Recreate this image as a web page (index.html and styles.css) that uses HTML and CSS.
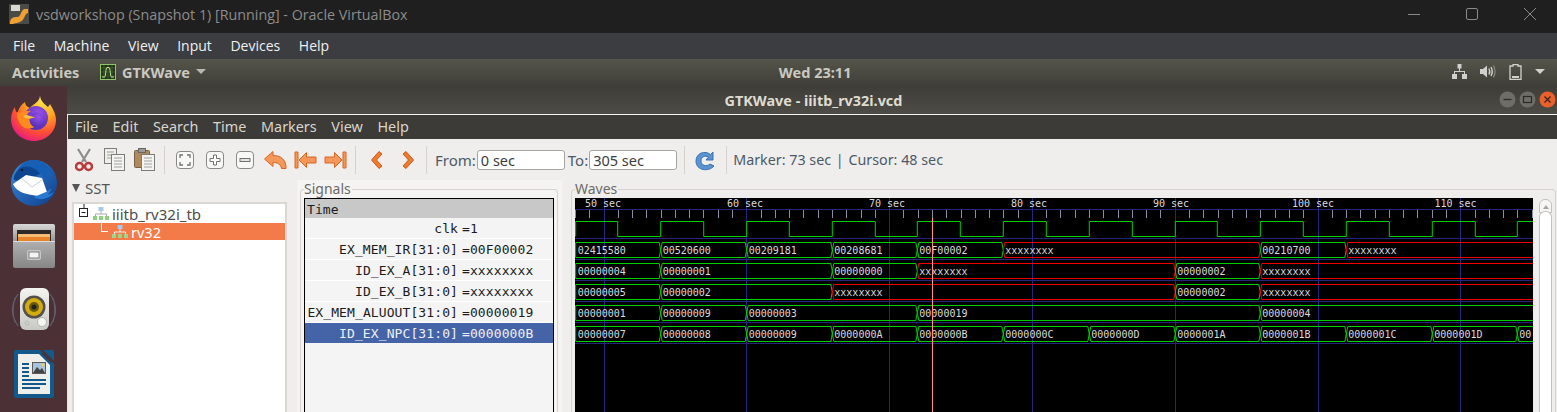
FILE: index.html
```html
<!DOCTYPE html>
<html lang="en">
<head>
    <meta charset="UTF-8">
    <title>vsdworkshop (Snapshot 1) [Running] - Oracle VirtualBox</title>
    <link rel="stylesheet" href="styles.css">
</head>
<body>
    <!-- host window -->
    <div class="winbar">
        <svg class="vbox-logo" width="20" height="20" viewBox="0 0 20 20">
            <rect width="20" height="20" fill="#4a4a48"/>
            <rect x="2" y="1" width="9" height="6" fill="#d8d8d0"/>
            <path d="M1 19 C1 14 4 13 8 13 C12 13 11 8 15 5 L19 5 L19 9 C15 10 16 16 11 18 C8 19.500 5 19 4 20 L1 20Z" fill="#f0a030"/>
        </svg>
        <span class="winbar-title">vsdworkshop (Snapshot 1) [Running] - Oracle VirtualBox</span>
        <div class="winbar-ctl">
            <svg width="14" height="14" viewBox="0 0 14 14"><path d="M1 7.500H13" stroke="#8a8a8a" fill="none"/></svg>
            <svg width="14" height="14" viewBox="0 0 14 14"><rect x="1.500" y="1.500" width="11" height="11" rx="1.500" stroke="#8a8a8a" fill="none"/></svg>
            <svg width="14" height="14" viewBox="0 0 14 14"><path d="M1 1L13 13M13 1L1 13" stroke="#8a8a8a" fill="none"/></svg>
        </div>
    </div>
    <div class="vmenu">
        <span>File</span><span>Machine</span><span>View</span><span>Input</span><span>Devices</span><span>Help</span>
    </div>

    <!-- gnome top bar -->
    <div class="topbar">
        <span class="activities">Activities</span>
        <svg class="app-icon" width="16" height="16" viewBox="0 0 16 16">
            <rect x=".5" y=".5" width="15" height="15" fill="#24341a" stroke="#8fc46a"/>
            <path d="M4 1V15M8 1V15M12 1V15M1 4H15M1 8H15M1 12H15" stroke="#4a6c32" stroke-width=".6"/>
            <path d="M2 13H4.500C6 13 5.500 3.500 7 3.500H9C10.500 3.500 10 13 11.500 13H14" stroke="#c4ec9c" fill="none"/>
        </svg>
        <span class="app-name">GTKWave</span>
        <span class="caret"></span>
        <span class="clock">Wed 23:11</span>
        <div class="tray">
            <svg width="15" height="15" viewBox="0 0 15 15"><path d="M5.500 0H9.500V4.500H8V7H13V10H15V15H10V10H12V8H3V10H5V15H0V10H2V7H7V4.500H5.500Z" fill="#d0d0cc"/></svg>
            <svg width="16" height="15" viewBox="0 0 16 15"><path d="M0 5H3L7 1.500V13.500L3 10H0Z" fill="#d0d0cc"/><path d="M9 4.500Q10.500 7.500 9 10.500M11 3Q13.500 7.500 11 12" stroke="#d0d0cc" stroke-width="1.400" fill="none"/><path d="M13.500 1.500Q16.500 7.500 13.500 13.500" stroke="#8a8a86" stroke-width="1.200" fill="none"/></svg>
            <svg width="13" height="16" viewBox="0 0 13 16"><path d="M4 .500H9V2H12V15.500H1V2H4Z" fill="none" stroke="#d0d0cc" stroke-width="1.300"/><rect x="3" y="12" width="7" height="2" fill="#d0d0cc"/></svg>
            <span class="caret"></span>
        </div>
    </div>

    <div class="desktop">
        <div class="dock">
            <div class="dock-item">
                <svg width="46" height="46" viewBox="0 0 46 46">
                    <defs>
                        <radialGradient id="ffBody" cx=".7" cy=".15" r=".95">
                            <stop offset="0" stop-color="#ffe54a"/>
                            <stop offset=".4" stop-color="#ff9c1e"/>
                            <stop offset=".72" stop-color="#ff4a38"/>
                            <stop offset="1" stop-color="#e2148c"/>
                        </radialGradient>
                        <radialGradient id="ffGlobe" cx=".6" cy=".3" r=".8">
                            <stop offset="0" stop-color="#9a50e8"/>
                            <stop offset="1" stop-color="#4a2ab0"/>
                        </radialGradient>
                    </defs>
                    <path d="M29 0C29 5 33 9 37 12C38 10.500 38.500 10 39 9C42 14 45 19 45 25C45 37 35 46 23 46C10 46 0 36 0 24C0 20 1.500 15 4 12C4 15 5 17 6.500 18C7.500 14 10.500 9 14 7C14 10 16 12 19 13C22 9 29 7 29 0Z" fill="url(#ffBody)"/>
                    <circle cx="25" cy="23" r="12" fill="url(#ffGlobe)"/>
                    <path d="M6 17C9 20 14 15 20 16C16 18 15 20 18 21C22 22 27 21 30 24C28 31 21 35 14 33C8 30 6 24 6 17Z" fill="#ff8a1e"/>
                    <circle cx="26" cy="25" r="7.500" fill="url(#ffGlobe)"/>
                    <path d="M12 21C15 19 20 22 24 22C20 24 16 25 12 21Z" fill="#ffc04a"/>
                </svg>
            </div>
            <div class="dock-item">
                <svg width="48" height="48" viewBox="0 0 48 48">
                    <defs>
                        <linearGradient id="tbBody" x1="0" y1="0" x2="1" y2="1">
                            <stop offset="0" stop-color="#3a8ee0"/>
                            <stop offset="1" stop-color="#0c3c8a"/>
                        </linearGradient>
                    </defs>
                    <circle cx="24" cy="25" r="23" fill="url(#tbBody)"/>
                    <path d="M6 18C7 8 16 1 25 2C33 3 41 9 44 17L38 14L40 22L33 18C28 12 20 14 6 18Z" fill="#155fb4"/>
                    <path d="M4 22C3 17 8 10 13 9C19 7 27 11 30 16L12 24Z" fill="#0d4690"/>
                    <circle cx="12" cy="12" r="1.300" fill="#1b1b1b"/>
                    <path d="M3 26L16 17L32 20L37 34L34 39L22 37C14 36 6 33 3 26Z" fill="#fff"/>
                    <path d="M11 20L22 29L32 22" fill="none" stroke="#c8d0d8"/>
                    <path d="M36 34L42 30L38 37L44 34C40 41 30 43 24 39Z" fill="#2a78d0"/>
                </svg>
            </div>
            <div class="dock-item">
                <svg width="42" height="44" viewBox="0 0 42 44">
                    <defs>
                        <linearGradient id="fmTop" x1="0" y1="0" x2="0" y2="1">
                            <stop offset="0" stop-color="#d8d8d8"/>
                            <stop offset="1" stop-color="#8c8c8c"/>
                        </linearGradient>
                        <linearGradient id="fmFront" x1="0" y1="0" x2="0" y2="1">
                            <stop offset="0" stop-color="#b0b0b0"/>
                            <stop offset="1" stop-color="#868686"/>
                        </linearGradient>
                    </defs>
                    <rect x="0" y="0" width="42" height="20" rx="2" fill="url(#fmTop)"/>
                    <rect x="4" y="6" width="34" height="13" fill="#2e2a28"/>
                    <rect x="5" y="10" width="32" height="4" fill="#f4bc74"/>
                    <rect x="5" y="13" width="32" height="4" fill="#e8842a"/>
                    <rect x="0" y="17" width="42" height="27" rx="2" fill="url(#fmFront)"/>
                    <rect x="0" y="17" width="42" height="1" fill="#dcdcdc"/>
                    <rect x="14" y="26" width="14" height="10" rx="2" fill="#c8c8c8"/>
                    <rect x="16" y="28" width="10" height="6" fill="#f4f4f4" stroke="#666" stroke-width=".8"/>
                </svg>
            </div>
            <div class="dock-item">
                <svg width="48" height="44" viewBox="0 0 48 44">
                    <defs>
                        <linearGradient id="rbBody" x1="0" y1="0" x2="0" y2="1">
                            <stop offset="0" stop-color="#f4f4f0"/>
                            <stop offset="1" stop-color="#c8c8c4"/>
                        </linearGradient>
                    </defs>
                    <path d="M8 6Q-3 22 8 38M5 10Q1 22 5 34M40 6Q51 22 40 38M43 10Q47 22 43 34" stroke="#6a6a7e" stroke-width="1.200" fill="none" opacity=".8"/>
                    <rect x="10" y="0" width="29" height="42" rx="6" fill="url(#rbBody)"/>
                    <circle cx="24" cy="19" r="11.500" fill="#55504a"/>
                    <circle cx="24" cy="19" r="9" fill="#d4ac10"/>
                    <circle cx="24" cy="19" r="5" fill="#6a5a10"/>
                    <circle cx="24" cy="19" r="2.500" fill="#222"/>
                    <circle cx="32" cy="34" r="4.500" fill="#f4f4f0" stroke="#a8a8a4" stroke-width=".8"/>
                    <circle cx="17" cy="35" r="2" fill="none" stroke="#b4b4b0" stroke-width=".8"/>
                </svg>
            </div>
            <div class="dock-item">
                <svg width="40" height="48" viewBox="0 0 40 48">
                    <path d="M2 0H26L40 14V46Q40 48 38 48H2Q0 48 0 46V2Q0 0 2 0Z" fill="#125a8c"/>
                    <path d="M29 0H38Q40 0 40 2V11Z" fill="#125a8c"/>
                    <path d="M4 4H25L36 15V44H4Z" fill="#eeeeea"/>
                    <path d="M28 3L37 12" stroke="#4b3136" stroke-width="1.500"/>
                    <path d="M8 14H15M8 18H15M8 22H15M8 26H15M8 30H32M8 34H32M8 38H26" stroke="#125a8c" stroke-width="2"/>
                    <rect x="18.500" y="12.500" width="13" height="11" fill="#a8c4dc" stroke="#5a5a5a"/>
                    <path d="M19 23L23 17L26 20L28 18L31 23Z" fill="#444"/>
                    <circle cx="29" cy="15" r="1.500" fill="#f0d050"/>
                </svg>
            </div>
        </div>

        <div class="gtk-window">
            <div class="gtk-title">
                <span>GTKWave - iiitb_rv32i.vcd</span>
                <div class="gtk-ctl">
                    <svg width="17" height="17" viewBox="0 0 17 17"><circle cx="8.500" cy="8.500" r="8" fill="#6e6d68"/><path d="M4.500 8.500H12.500" stroke="#2c2b28" stroke-width="1.300"/></svg>
                    <svg width="17" height="17" viewBox="0 0 17 17"><circle cx="8.500" cy="8.500" r="8" fill="#6e6d68"/><rect x="4.500" y="5.500" width="8" height="6" fill="none" stroke="#2c2b28" stroke-width="1.200"/></svg>
                    <svg width="17" height="17" viewBox="0 0 17 17"><circle cx="8.500" cy="8.500" r="8" fill="#e9602c"/><path d="M5.500 5.500L11.500 11.500M11.500 5.500L5.500 11.500" stroke="#3a2418" stroke-width="1.300"/></svg>
                </div>
            </div>
            <div class="gtk-body">
                <div class="gtk-menu">
                    <span>File</span><span>Edit</span><span>Search</span><span>Time</span><span>Markers</span><span>View</span><span>Help</span>
                </div>

                <div class="toolbar">
                    <div class="tool">
                        <svg width="18" height="24" viewBox="0 0 18 24"><path d="M3 1L11 14M15 1L7 14" stroke="#8c8c88" stroke-width="2.200" fill="none"/><circle cx="4.500" cy="18.500" r="3.500" fill="none" stroke="#b83a3a" stroke-width="2.500"/><circle cx="13.500" cy="18.500" r="3.500" fill="none" stroke="#b83a3a" stroke-width="2.500"/></svg>
                    </div>
                    <div class="tool">
                        <svg width="21" height="23" viewBox="0 0 21 23"><rect x=".5" y=".5" width="12" height="15" fill="#eeeeea" stroke="#7c7c78"/><path d="M3 4H10M3 7H10M3 10H10" stroke="#a0a09c"/><rect x="7.500" y="6.500" width="13" height="16" fill="#f4f4f2" stroke="#7c7c78"/><path d="M10 10H18M10 13H18M10 16H18M10 19H18" stroke="#a0a09c"/></svg>
                    </div>
                    <div class="tool">
                        <svg width="21" height="23" viewBox="0 0 21 23"><rect x=".5" y="2.500" width="15" height="17" rx="1" fill="#b08a5c" stroke="#7a6040"/><rect x="4.500" y=".5" width="7" height="4" fill="#9a9a96" stroke="#666"/><rect x="7.500" y="6.500" width="13" height="16" fill="#f4f4f2" stroke="#7c7c78"/><path d="M10 10H18M10 13H18M10 16H18M10 19H18" stroke="#a0a09c"/></svg>
                    </div>
                    <span class="sep"></span>
                    <div class="tool">
                        <svg width="18" height="18" viewBox="0 0 18 18"><rect x=".5" y=".5" width="17" height="17" rx="3.500" fill="#f8f8f6" stroke="#8a8a86"/><path d="M7 4H4V7M11 4H14V7M7 14H4V11M11 14H14V11" stroke="#70706c" stroke-width="1.300" fill="none"/></svg>
                    </div>
                    <div class="tool">
                        <svg width="18" height="18" viewBox="0 0 18 18"><rect x=".5" y=".5" width="17" height="17" rx="3.500" fill="#f8f8f6" stroke="#8a8a86"/><path d="M7.500 4H10.500V7.500H14V10.500H10.500V14H7.500V10.500H4V7.500H7.500Z" fill="#fff" stroke="#70706c"/></svg>
                    </div>
                    <div class="tool">
                        <svg width="18" height="18" viewBox="0 0 18 18"><rect x=".5" y=".5" width="17" height="17" rx="3.500" fill="#f8f8f6" stroke="#8a8a86"/><rect x="4" y="7.500" width="10" height="3" fill="#e4e4e0" stroke="#70706c"/></svg>
                    </div>
                    <div class="tool">
                        <svg width="23" height="18" viewBox="0 0 23 18"><path d="M9 .5V4.500C16 4.500 22.500 8 22 17.500H17.500C17 13 13 11.500 9 11.500V15.500L.5 8Z" fill="#f4975a" stroke="#dc6420" stroke-linejoin="round"/></svg>
                    </div>
                    <div class="tool">
                        <svg width="23" height="18" viewBox="0 0 23 18"><path d="M1 1H4V17H1Z" fill="#f4975a" stroke="#dc6420"/><path d="M5 9L12.500 1.500V6H22V12H12.500V16.500Z" fill="#f4975a" stroke="#dc6420" stroke-linejoin="round"/></svg>
                    </div>
                    <div class="tool">
                        <svg width="23" height="18" viewBox="0 0 23 18"><path d="M22 1H19V17H22Z" fill="#f4975a" stroke="#dc6420"/><path d="M18 9L10.500 1.500V6H1V12H10.500V16.500Z" fill="#f4975a" stroke="#dc6420" stroke-linejoin="round"/></svg>
                    </div>
                    <span class="sep"></span>
                    <div class="tool">
                        <svg width="13" height="20" viewBox="0 0 13 20"><path d="M9 1.500L1.500 10L9 18.500L12 16L6.500 10L12 4Z" fill="#ee7a30" stroke="#cc5a1c" stroke-linejoin="round"/></svg>
                    </div>
                    <div class="tool next">
                        <svg width="13" height="20" viewBox="0 0 13 20"><path d="M4 1.500L11.500 10L4 18.500L1 16L6.500 10L1 4Z" fill="#ee7a30" stroke="#cc5a1c" stroke-linejoin="round"/></svg>
                    </div>
                    <span class="sep"></span>
                    <label class="range from">From:<input type="text" value="0 sec"></label>
                    <label class="range to">To:<input type="text" value="305 sec"></label>
                    <span class="sep"></span>
                    <div class="reload">
                        <svg width="21" height="22" viewBox="0 0 21 22"><path d="M18 3V11H11L13.500 8C10 6 6 8 6 12C6 16 11 18.500 15 15L19 17C14 23 1 22 1 12C1 4 10 1 15.500 5.500Z" fill="#5b93d0" stroke="#3a70b0" stroke-linejoin="round"/></svg>
                    </div>
                    <span class="sep"></span>
                    <span class="status">Marker: 73 sec <span class="pipe">|</span> Cursor: 48 sec</span>
                </div>

                <div class="panes">
                    <div class="sst">
                        <div class="sst-head"><span class="sst-arrow"></span>SST</div>
                        <div class="tree">
                            <div class="tree-row">
                                <svg class="expander" width="10" height="16" viewBox="0 0 10 16"><path d="M5 0V4" stroke="#222"/><rect x=".5" y="4.500" width="8" height="8" fill="#fff" stroke="#222"/><path d="M2.500 8.500H6.500" stroke="#222"/></svg>
                                <svg class="tree-icon" width="16" height="13" viewBox="0 0 16 13"><rect x="5.500" y="0" width="5" height="4" fill="#a8c8f0"/><path d="M8 4V7M2.500 9V7H13.500V9" stroke="#aaa" fill="none"/><rect x="0" y="9" width="4" height="4" fill="#8ed080"/><rect x="6" y="9" width="4" height="4" fill="#8ed080"/><rect x="12" y="9" width="4" height="4" fill="#8ed080"/></svg>
                                <span>iiitb_rv32i_tb</span>
                            </div>
                            <div class="tree-row selected">
                                <span class="branch"></span>
                                <svg class="tree-icon" width="16" height="13" viewBox="0 0 16 13"><rect x="5.500" y="0" width="5" height="4" fill="#a8c8f0"/><path d="M8 4V7M2.500 9V7H13.500V9" stroke="#eee" fill="none"/><rect x="0" y="9" width="4" height="4" fill="#9ad88a"/><rect x="6" y="9" width="4" height="4" fill="#9ad88a"/><rect x="12" y="9" width="4" height="4" fill="#9ad88a"/></svg>
                                <span>rv32</span>
                            </div>
                        </div>
                    </div>

                    <div class="signals-pane">
                        <fieldset class="frame">
                            <legend>Signals</legend>
                            <div class="signal-list">
                                <div class="time-head">Time</div>
                                <div class="signal"><span class="sig-name">clk</span><span>=1</span></div>
                                <div class="signal"><span class="sig-name">EX_MEM_IR[31:0]</span><span>=00F00002</span></div>
                                <div class="signal"><span class="sig-name">ID_EX_A[31:0]</span><span>=xxxxxxxx</span></div>
                                <div class="signal"><span class="sig-name">ID_EX_B[31:0]</span><span>=xxxxxxxx</span></div>
                                <div class="signal"><span class="sig-name">EX_MEM_ALUOUT[31:0]</span><span>=00000019</span></div>
                                <div class="signal active"><span class="sig-name">ID_EX_NPC[31:0]</span><span>=0000000B</span></div>
                            </div>
                        </fieldset>
                    </div>

                    <div class="waves-pane">
                        <fieldset class="frame">
                            <legend>Waves</legend>
                            <div class="wave-wrap">
                                <svg id="waves" class="wave-canvas" width="958" height="214" viewBox="575 198 958 214"></svg>
                                <div class="vscroll">
                                    <div class="vscroll-btn"><span></span></div>
                                    <div class="vscroll-thumb"></div>
                                </div>
                            </div>
                        </fieldset>
                    </div>
                </div>
            </div>
        </div>
    </div>
    <script src="waves.js"></script>
</body>
</html>
```
FILE: styles.css
```css
* {
    box-sizing: border-box;
}
html, body {
    margin: 0;
    height: 412px;
    overflow: hidden;
}
body {
    font-family: "Noto Sans", "Open Sans", sans-serif;
    background-color: #3c3b37;
}

/* host window */
.winbar {
    display: flex;
    align-items: center;
    height: 33px;
    padding: 0 20px 5px 9px;
    background-color: #1f1f1f;
    color: #8c8c8c;
    font-family: "Open Sans", sans-serif;
    font-size: 14.3px;
}
.winbar-title {
    margin-left: 7px;
}
.winbar-ctl {
    display: flex;
    gap: 44px;
    margin-left: auto;
}
.vmenu {
    display: flex;
    align-items: center;
    gap: 18.6px;
    height: 26px;
    padding: 0 0 2px 13px;
    background-color: #3b3d41;
    color: #f0f0f0;
    font-family: "Open Sans", sans-serif;
    font-size: 14px;
}

/* top bar */
.topbar {
    display: flex;
    align-items: center;
    height: 27px;
    padding: 0 0 2px 12px;
    background: linear-gradient(#56554b, #3f3e38);
    color: #c9c9c2;
    font-size: 14.5px;
    font-weight: bold;
}
.activities {
    width: 88px;
}
.app-name {
    margin-left: 6px;
}
.caret {
    width: 0;
    height: 0;
    margin-left: 6px;
    border-left: 5px solid transparent;
    border-right: 5px solid transparent;
    border-top: 5px solid #b8b8b2;
}
.clock {
    margin-left: 573px;
}
.tray {
    display: flex;
    align-items: center;
    gap: 13px;
    margin-left: auto;
    padding-right: 12px;
}
.tray .caret {
    margin-left: 0;
    border-top-color: #d0d0cc;
}

/* dock + window */
.desktop {
    display: flex;
    height: 326px;
}
.dock {
    display: flex;
    flex-direction: column;
    flex: none;
    width: 67px;
    background-color: #4b3136;
}
.dock-item {
    display: flex;
    flex: none;
    align-items: center;
    justify-content: center;
    height: 64px;
}
.gtk-window {
    display: flex;
    flex-direction: column;
    flex: 1;
    min-width: 0;
}
.gtk-title {
    display: flex;
    flex: none;
    align-items: center;
    justify-content: center;
    position: relative;
    height: 28px;
    padding-left: 3px;
    background: linear-gradient(#3e3d38, #4c4b45);
    color: #dfdbd2;
    font-size: 14.4px;
    font-weight: bold;
}
.gtk-ctl {
    display: flex;
    position: absolute;
    top: 5px;
    right: 1px;
    gap: 3px;
}
.gtk-body {
    flex: 1;
    min-height: 0;
    border-top: 1px solid #f4f4f2;
    border-left: 1px solid #e8e6e2;
    background-color: #f0eeec;
}
.gtk-menu {
    display: flex;
    align-items: center;
    gap: 14.6px;
    height: 24px;
    padding: 0 0 2px 7px;
    background-color: #3c3b37;
    color: #d9d5cc;
    font-size: 14.4px;
}

/* toolbar */
.toolbar {
    display: flex;
    align-items: center;
    height: 41px;
    padding-left: 1px;
    color: #4c5a68;
    font-size: 15px;
}
.tool {
    display: flex;
    flex: none;
    align-items: center;
    justify-content: center;
    width: 30px;
    height: 30px;
}
.tool.next {
    margin: 0 -2px 0 2px;
}
.sep {
    flex: none;
    width: 1px;
    height: 28px;
    margin: 0 5px;
    background-color: #d6d3cf;
}
.range {
    display: flex;
    align-items: center;
    gap: 1px;
}
.range.from {
    margin-left: 3px;
}
.range.to {
    margin: 0 2px 0 3px;
}
.range input {
    width: 88px;
    height: 20px;
    padding: 0 3px;
    border: 1px solid #a8a5a0;
    border-radius: 3px;
    background: #fff;
    color: #3c3c3c;
    font-family: "Noto Sans", sans-serif;
    font-size: 14.5px;
}
.reload {
    display: flex;
    flex: none;
    justify-content: center;
    width: 31px;
}
.status {
    margin-left: 1px;
    font-size: 14.3px;
    white-space: nowrap;
}
.pipe {
    margin: 0 1px;
}

/* panes, they run on past the bottom of the shot so no bottom borders */
.panes {
    display: flex;
    height: 232px;
}
.sst {
    flex: none;
    width: 229px;
    padding: 0 0 0 4px;
}
.sst-head {
    display: flex;
    align-items: center;
    gap: 5px;
    height: 22px;
    padding-bottom: 6px;
    color: #555;
    font-size: 15px;
    line-height: 16px;
}
.sst-arrow {
    width: 0;
    height: 0;
    border-left: 4.500px solid transparent;
    border-right: 4.500px solid transparent;
    border-top: 8px solid #555;
}
.tree {
    width: 215px;
    height: 210px;
    border: 2px solid #dbd8d4;
    border-bottom: 0;
    background-color: #fff;
    color: #4d4d4d;
    font-size: 15px;
}
.tree-row {
    display: flex;
    align-items: center;
    height: 19px;
    padding-left: 5px;
}
.tree-row.selected {
    height: 17px;
    padding-left: 28px;
    background-color: #f37b4a;
    color: #fff;
    font-size: 14.5px;
}
.expander {
    flex: none;
    margin-top: -3px;
}
.tree-row > .tree-icon {
    flex: none;
    margin: 0 3px 0 4px;
}
.branch {
    flex: none;
    width: 7px;
    height: 10px;
    margin: -10px 0 0 -1px;
    border-left: 1px solid #fff;
    border-bottom: 1px solid #fff;
}

.signals-pane {
    flex: none;
    width: 265px;
    padding: 0 4px 0 3px;
    background-color: #f5f4f3;
}
.waves-pane {
    flex: 1;
    min-width: 0;
    padding: 0 1px 0 9px;
}
.frame {
    height: 232px;
    margin: 0;
    padding: 0 3px;
    border: 1px solid #d6d3cf;
    border-bottom: 0;
    border-radius: 4px 4px 0 0;
}
.frame legend {
    height: 18px;
    padding: 0 1px 0 0;
    color: #6c6a66;
    font-size: 14px;
    line-height: 18px;
}
.signal-list {
    height: 214px;
    border: 1px solid #000;
    border-bottom: 0;
    background-color: #f4f4f4;
    color: #1c1c1c;
    font-family: "DejaVu Sans Mono", monospace;
    font-size: 13px;
    letter-spacing: .1px;
}
.time-head {
    height: 19px;
    padding: 1px 0 0 2px;
    background-color: #c8c8c8;
    line-height: 19px;
}
.signal {
    display: flex;
    gap: 4px;
    height: 21px;
    border-bottom: 1px solid #fff;
    line-height: 21px;
}
.signal.active {
    height: 20px;
    border-bottom: 0;
    background-color: #4564a8;
    color: #eef0f6;
}
.sig-name {
    width: 153px;
    text-align: right;
}

/* waves */
.wave-wrap {
    display: flex;
}
.wave-canvas {
    display: block;
    flex: none;
    background-color: #000;
}
.wave-canvas text {
    fill: #dcdcdc;
    font-family: "DejaVu Sans Mono", monospace;
    font-size: 10px;
}
.vscroll {
    flex: none;
    width: 13px;
    margin: 1px 0 0 6px;
}
.vscroll-btn {
    display: flex;
    justify-content: center;
    height: 14px;
    padding-top: 5px;
    border: 1px solid #c4c1bc;
    border-radius: 6px 6px 0 0;
    background-color: #f6f5f4;
}
.vscroll-btn span {
    width: 0;
    height: 0;
    border-left: 3px solid transparent;
    border-right: 3px solid transparent;
    border-bottom: 4px solid #a8a5a0;
}
.vscroll-thumb {
    height: 201px;
    margin-top: -2px;
    border: 1px solid #c4c1bc;
    border-bottom: 0;
    border-radius: 6px 6px 0 0;
    background-color: #fff;
}
```
FILE: waves.js
```js
// draws the GTKWave trace area, coordinates are page pixels (see the viewBox)
const svg = document.getElementById('waves');
const NS = 'http://www.w3.org/2000/svg';
const GREEN = '#00d000';
const RED = '#f00000';
const GRID = '#26267e';
const SEC = 14.28;
const T50 = 603.5;

function add(tag, attrs, text) {
    const el = document.createElementNS(NS, tag);
    for (const k in attrs) el.setAttribute(k, attrs[k]);
    if (text) el.textContent = text;
    svg.appendChild(el);
}
function vline(x, y1, y2, color) {
    const px = Math.round(x) + 0.5;
    add('line', { x1: px, x2: px, y1: y1, y2: y2, stroke: color });
}
function hline(y) {
    add('line', { x1: 575, x2: 1533, y1: y, y2: y, stroke: GRID });
}

// ruler ticks, one per second
for (let t = 48; t <= 116; t++) {
    if (t % 10 !== 0) vline(T50 + (t - 50) * SEC, 210, 218, '#8c8ca4');
}
// grid
for (let t = 50; t <= 110; t += 10) vline(T50 + (t - 50) * SEC, 198, 412, GRID);
[209.5, 238.5, 259.5, 280.5, 301.5, 322.5, 343.5].forEach(hline);

const labels = [[585, '50'], [727, '60'], [869, '70'], [1011, '80'], [1153, '90'], [1292, '100'], [1434.5, '110']];
labels.forEach(l => add('text', { x: l[0], y: 207 }, l[1] + ' sec'));

// clk, transitions alternate starting from the low to high edge
const clk = [575.7, 617.7, 660.7, 703.7, 746.7, 789.3, 832.3, 875.3, 917.3, 960.3, 1003.3, 1046.3,
    1089.3, 1132.3, 1175.3, 1217.3, 1260.3, 1303.3, 1346.3, 1389.3, 1432.3, 1475.3, 1517.3];
let pts = '';
let high = true;
clk.forEach(x => {
    pts += `${x},${high ? 236.5 : 221.5} ${x},${high ? 221.5 : 236.5} `;
    high = !high;
});
pts += `1534,${high ? 236.5 : 221.5}`;
add('polyline', { points: pts, fill: 'none', stroke: GREEN });

// bus values: [start x, value]
const X = 'xxxxxxxx';
const rows = [
    [[575.7, '02415580'], [660.7, '00520600'], [746.7, '00209181'], [832.3, '00208681'], [917.3, '00F00002'],
        [1003.3, X], [1260.3, '00210700'], [1346.3, X]],
    [[575.7, '00000004'], [660.7, '00000001'], [832.3, '00000000'], [917.3, X], [1175.3, '00000002'], [1260.3, X]],
    [[575.7, '00000005'], [660.7, '00000002'], [832.3, X], [1175.3, '00000002'], [1260.3, X]],
    [[575.7, '00000001'], [660.7, '00000009'], [746.7, '00000003'], [917.3, '00000019'], [1260.3, '00000004']],
    [[575.7, '00000007'], [660.7, '00000008'], [746.7, '00000009'], [832.3, '0000000A'], [917.3, '0000000B'],
        [1003.3, '0000000C'], [1089.3, '0000000D'], [1175.3, '0000001A'], [1260.3, '0000001B'], [1346.3, '0000001C'],
        [1432.3, '0000001D'], [1517.3, '00']]
];
rows.forEach((row, r) => {
    const top = 242.5 + r * 21;
    const bot = top + 15;
    const mid = top + 7.5;
    row.forEach((seg, i) => {
        const x0 = seg[0];
        const x1 = i + 1 < row.length ? row[i + 1][0] : 1536;
        const color = seg[1] === X ? RED : GREEN;
        const left = i === 0 ? `${x0},${bot} ${x0},${top}` : `${x0 + 1.5},${bot} ${x0},${mid} ${x0 + 1.5},${top}`;
        add('polygon', {
            points: `${left} ${x1 - 1.5},${top} ${x1},${mid} ${x1 - 1.5},${bot}`,
            fill: 'none',
            stroke: color
        });
        add('text', { x: x0 + 2, y: top + 11 }, seg[1]);
    });
});

// marker
vline(932, 218, 412, '#ff9088');
```
